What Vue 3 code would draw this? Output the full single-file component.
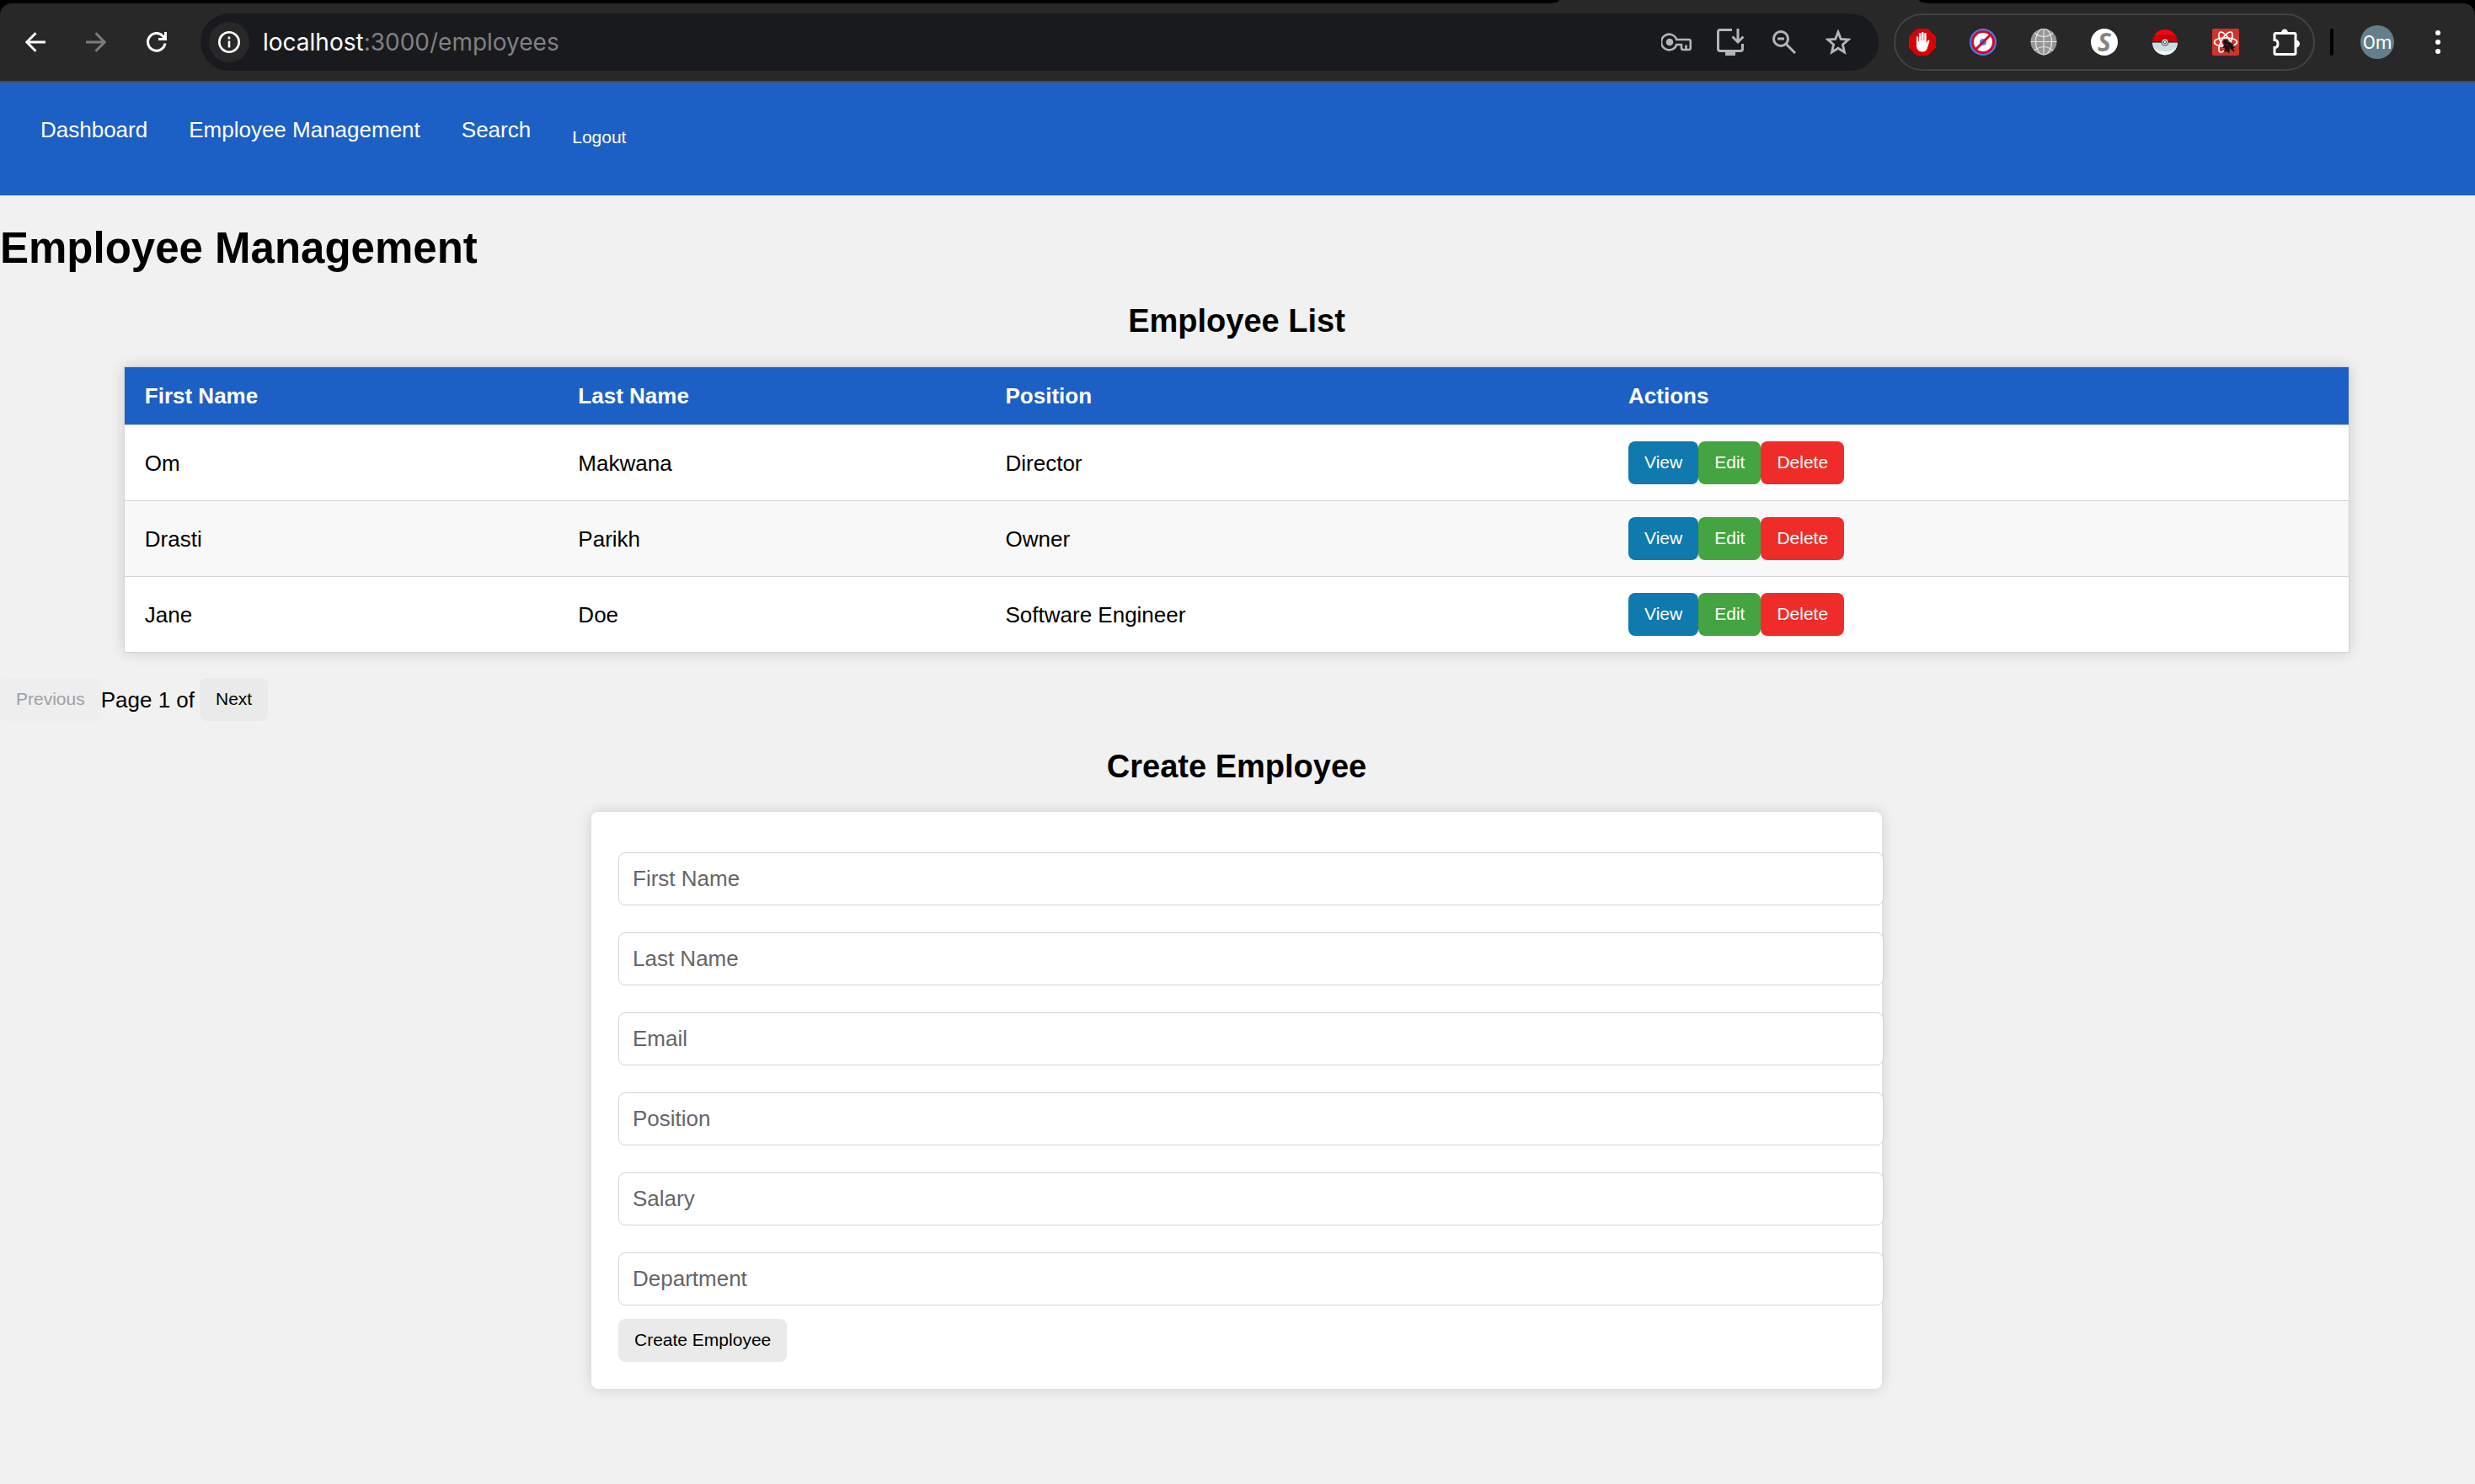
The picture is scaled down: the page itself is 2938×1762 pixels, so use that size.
<script setup>
import { ref } from 'vue'

const navLinks = ['Dashboard', 'Employee Management', 'Search']

const employees = ref([
  { id: 1, firstName: 'Om', lastName: 'Makwana', position: 'Director' },
  { id: 2, firstName: 'Drasti', lastName: 'Parikh', position: 'Owner' },
  { id: 3, firstName: 'Jane', lastName: 'Doe', position: 'Software Engineer' }
])

const fields = ['First Name', 'Last Name', 'Email', 'Position', 'Salary', 'Department']
const form = ref({})
const page = ref(1)
</script>

<template>
  <div class="browser">
    <div class="tab-strip"><span class="strip left"></span><span class="strip right"></span></div>
    <div class="toolbar">
      <div class="history">
        <button type="button" class="icon-btn" aria-label="Back">
          <svg width="24" height="24" viewBox="0 0 24 24" fill="none" stroke="#fff" stroke-width="3"><path d="M24 12H2M12.500 1.200 1.800 12l10.700 10.800" /></svg>
        </button>
        <button type="button" class="icon-btn" aria-label="Forward">
          <svg width="24" height="24" viewBox="0 0 24 24" fill="none" stroke="#7c7c7c" stroke-width="3"><path d="M0 12h22M11.500 1.200 22.200 12l-10.700 10.800" /></svg>
        </button>
        <button type="button" class="icon-btn" aria-label="Reload">
          <svg width="24" height="24" viewBox="0 0 24 24" fill="none" stroke="#fff" stroke-width="3"><path d="M22 13.500A10.300 10.300 0 1 1 19.500 5L22 8" /><path d="M22.500 0v8.500H14" /></svg>
        </button>
      </div>
      <div class="address">
        <button type="button" class="site-info" aria-label="Site information">
          <svg width="26" height="26" viewBox="0 0 26 26" fill="none" stroke="#fff"><circle cx="13" cy="13" r="11.700" stroke-width="2.600" /><path d="M13 11.500v8M13 6.500v3" stroke-width="2.600" /></svg>
        </button>
        <div class="url"><span class="host">localhost</span>:3000/employees</div>
        <div class="address-actions">
          <button type="button" class="icon-btn" aria-label="Passwords">
            <svg width="36" height="22" viewBox="0 0 36 22"><circle cx="10" cy="11" r="4.300" fill="#b4b5b7" /><path d="M18.200 8A9.300 9.300 0 1 0 18.200 14H24v4c0 1.200.8 2 2 2h6.800c1.200 0 2-.8 2-2v-8c0-1.200-.8-2-2-2ZM29.500 19.500v-5" fill="none" stroke="#b4b5b7" stroke-width="2.600" /></svg>
          </button>
          <button type="button" class="icon-btn" aria-label="Install app">
            <svg width="32" height="32" viewBox="0 0 32 32" fill="none" stroke="#b4b5b7" stroke-width="3"><path d="M18 1.500H4C2.200 1.500 1.500 2.200 1.500 4v20c0 1.800.7 2.600 2.500 2.600h24c1.800 0 2.500-.8 2.500-2.600v-6M25 0v15M18.500 9.500l6.500 6.500 6.500-6.500" /><path d="M10 27h12v5H10z" fill="#b4b5b7" stroke="none" /></svg>
          </button>
          <button type="button" class="icon-btn" aria-label="Zoom">
            <svg width="28" height="28" viewBox="0 0 28 28" fill="none" stroke="#b4b5b7" stroke-width="3"><circle cx="10" cy="10" r="8.500" /><path d="M16.200 16.200 27 27M6 10h8" /></svg>
          </button>
          <button type="button" class="icon-btn" aria-label="Bookmark">
            <svg width="30" height="30" viewBox="0 0 30 30" fill="none" stroke="#b4b5b7" stroke-width="2.800"><path d="m15 3 3.200 8.300 9 .7-6.800 5.900 2.100 9L15 22.200l-7.500 4.700 2.100-9L2.800 12l9-.7Z" /></svg>
          </button>
        </div>
      </div>
      <div class="extensions">
        <button type="button" class="icon-btn" aria-label="Ad blocker">
          <svg width="32" height="32" viewBox="0 0 32 32"><path d="M9.500 0h13L32 9.500v13L22.500 32h-13L0 22.500v-13Z" fill="#dc0005" /><path d="M9 10.500c0-1.800 2.300-1.800 2.300 0V15h.7V6.500c0-1.900 2.500-1.900 2.500 0V14h.6V5.300c0-1.900 2.500-1.900 2.500 0V14h.6V6.500c0-1.900 2.500-1.900 2.500 0v11l1.300-3c.8-1.800 2.900-1.200 2.400.6l-2.600 8.500C20.900 26 19.500 27.500 16.500 27.500 11 27.500 9 24 9 19.500Z" fill="#fff" /></svg>
        </button>
        <button type="button" class="icon-btn" aria-label="Tracker blocker">
          <svg width="32" height="32" viewBox="0 0 32 32"><circle cx="16" cy="16" r="16" fill="#4a7fee" /><circle cx="16" cy="16" r="12.500" fill="#fff" stroke="#cf0a2c" stroke-width="3" /><circle cx="16" cy="16" r="4" fill="#4b82ec" /><path d="m7.500 24.500 17-17" stroke="#cf0a2c" stroke-width="3" /></svg>
        </button>
        <button type="button" class="icon-btn" aria-label="Proxy">
          <svg width="32" height="32" viewBox="0 0 32 32"><circle cx="16" cy="15.500" r="15.500" fill="#969696" /><g fill="none" stroke="#e4e4e4" stroke-width="1.200"><ellipse cx="16" cy="15.500" rx="9.500" ry="15.500" /><path d="M16 0v31M.5 15.500h31M5 5q11 9 22 0M5 26q11-9 22 0" /></g></svg>
        </button>
        <button type="button" class="icon-btn" aria-label="Style tool">
          <span class="s-mark">S</span>
        </button>
        <button type="button" class="icon-btn" aria-label="Pokéball">
          <svg width="32" height="32" viewBox="0 0 32 32"><path d="M1 16a15 15 0 0 1 30 0Z" fill="#d00008" /><path d="M3.500 8a15 15 0 0 1 25 0q-12.500-3-25 0Z" fill="#f50712" /><path d="M1 16.500a15 15 0 0 0 30 0Z" fill="#f3f8f8" /><path d="M1 16.500h30q-1 10.500-15 10.500T1 16.500Z" fill="#cbdde1" /><path d="M1 16h30" stroke="#222" stroke-width="1" /><circle cx="16" cy="16" r="4" fill="#fff" stroke="#333" stroke-width="1" /><circle cx="16" cy="16" r="1.800" fill="#fff" stroke="#333" stroke-width="1" /></svg>
        </button>
        <button type="button" class="icon-btn" aria-label="React developer tools">
          <svg width="32" height="32" viewBox="0 0 32 32">
            <rect width="32" height="32" rx="2" fill="#d0342c" />
            <g fill="none" stroke="#fff" stroke-width="1.700"><ellipse cx="16" cy="16" rx="13.500" ry="5.200" /><ellipse cx="16" cy="16" rx="13.500" ry="5.200" transform="rotate(60 16 16)" /><ellipse cx="16" cy="16" rx="13.500" ry="5.200" transform="rotate(120 16 16)" /></g>
            <path d="m13.500 20 10.500-2.500 3 4-2 8.500H14.500Z" fill="#d0342c" />
            <circle cx="16" cy="16" r="3" fill="#161616" />
            <ellipse cx="17.500" cy="23" rx="2.600" ry="5" transform="rotate(-28 17.500 23)" fill="#161616" />
            <ellipse cx="21.800" cy="20.500" rx="2.600" ry="5" transform="rotate(-28 21.800 20.500)" fill="#161616" />
            <path d="m12.500 22.500 3-1.500M14.500 27l3-2M19.500 29v-3M20 16v3M24.500 18l-2 1.500M26.500 22.500l-3-.5M26 27l-2-3" stroke="#161616" stroke-width="1.700" />
          </svg>
        </button>
        <button type="button" class="icon-btn" aria-label="Extensions">
          <svg width="32" height="32" viewBox="0 0 32 32"><path d="M3.500 5.500h22q1.500 0 1.500 1.500v22q0 1.500-1.500 1.500h-22q-1.500 0-1.500-1.500v-6.500c3 0 4-2 4-4.500s-1-4.500-4-4.500V7q0-1.500 1.500-1.500Z" fill="none" stroke="#fff" stroke-width="3" /><path d="M10 5a4 4.500 0 0 1 8 0ZM27.500 13.500a4.500 4.500 0 0 1 0 9Z" fill="#fff" /></svg>
        </button>
      </div>
      <span class="divider"></span>
      <button type="button" class="avatar">Om</button>
      <button type="button" class="icon-btn menu" aria-label="Menu">
        <svg width="8" height="28" viewBox="0 0 8 28" fill="#fff"><circle cx="4" cy="3" r="3" /><circle cx="4" cy="14" r="3" /><circle cx="4" cy="25" r="3" /></svg>
      </button>
    </div>
  </div>

  <nav class="navbar">
    <a v-for="link in navLinks" :key="link" href="#">{{ link }}</a>
    <button type="button" class="logout">Logout</button>
  </nav>

  <main>
    <h1>Employee Management</h1>

    <h2>Employee List</h2>
    <table>
      <thead>
        <tr>
          <th class="col-first">First Name</th>
          <th class="col-last">Last Name</th>
          <th class="col-position">Position</th>
          <th>Actions</th>
        </tr>
      </thead>
      <tbody>
        <tr v-for="employee in employees" :key="employee.id">
          <td>{{ employee.firstName }}</td>
          <td>{{ employee.lastName }}</td>
          <td>{{ employee.position }}</td>
          <td>
            <div class="actions">
              <button type="button" class="btn view">View</button>
              <button type="button" class="btn edit">Edit</button>
              <button type="button" class="btn delete">Delete</button>
            </div>
          </td>
        </tr>
      </tbody>
    </table>

    <div class="pagination">
      <button type="button" class="btn" :disabled="page === 1">Previous</button>
      <span>Page {{ page }} of</span>
      <button type="button" class="btn">Next</button>
    </div>

    <h2>Create Employee</h2>
    <form @submit.prevent>
      <input v-for="field in fields" :key="field" v-model="form[field]" type="text" :placeholder="field" :aria-label="field" />
      <button type="submit" class="btn">Create Employee</button>
    </form>
  </main>
</template>

<style>
body {
  margin: 0;
  background: #f1f1f1;
  font-family: "Liberation Sans", Arial, sans-serif;
  font-size: 26px;
  line-height: 30px;
  color: #000;
}
</style>

<style scoped>
button {
  border: 0;
  font-family: inherit;
}

.browser {
  background: #000;
  border-bottom: 2px solid #4c4b4a;
}

.tab-strip {
  display: flex;
  justify-content: space-between;
  height: 4px;
  background: #282828;
}

.strip {
  background: #000;
}

.strip.left {
  width: 63%;
  border-bottom-right-radius: 14px 4px;
}

.strip.right {
  width: 22%;
  flex: 0 0 auto;
  min-width: 660px;
  border-bottom-left-radius: 14px 4px;
}

.toolbar {
  display: flex;
  align-items: center;
  height: 92px;
  padding-right: 40px;
  border-radius: 14px 14px 0 0;
  background: #282828;
}

.icon-btn {
  display: flex;
  padding: 0;
  background: none;
}

.history {
  display: flex;
  gap: 48px;
  margin: 0 40px 0 30px;
}

.address {
  display: flex;
  flex: 1;
  align-items: center;
  height: 68px;
  box-sizing: border-box;
  padding: 0 32px 0 10px;
  border-radius: 34px;
  background: #191a1d;
}

.site-info {
  display: flex;
  align-items: center;
  justify-content: center;
  width: 48px;
  height: 48px;
  padding: 0;
  border-radius: 50%;
  background: #282828;
}

.url {
  flex: 1;
  margin-left: 16px;
  font-family: Inter, Roboto, sans-serif;
  font-size: 28px;
  line-height: 34px;
  color: #808182;
}

.host {
  color: #fff;
}

.address-actions {
  display: flex;
  align-items: center;
  gap: 32px;
}

.address-actions .icon-btn {
  width: 32px;
  justify-content: center;
}

.address-actions svg {
  flex: none;
}

.extensions {
  display: flex;
  align-items: center;
  gap: 40px;
  height: 68px;
  box-sizing: border-box;
  margin-left: 18px;
  padding: 0 16px;
  border: 2px solid #434343;
  border-radius: 34px;
}

.s-mark {
  width: 32px;
  border-radius: 50%;
  background: #fff;
  font: italic bold 30px/32px "Noto Sans", sans-serif;
  text-align: center;
  color: #858585;
}

.divider {
  width: 4px;
  height: 32px;
  margin: 0 32px 0 18px;
  border-radius: 2px;
  background: #000;
}

.avatar {
  width: 40px;
  height: 40px;
  padding: 0;
  border-radius: 50%;
  background: #657e8b;
  font-family: Roboto, sans-serif;
  font-size: 22px;
  color: #fff;
}

.menu {
  margin-left: 48px;
}

.navbar {
  display: flex;
  align-items: flex-start;
  gap: 49px;
  height: 93px;
  padding: 41px 48px 0;
  background: #1d60c5;
}

.navbar a {
  color: #fff;
  text-decoration: none;
}

.logout {
  margin-top: 11px;
  padding: 0;
  background: none;
  font-size: 21px;
  line-height: 26px;
  color: #fff;
}

main {
  padding-right: 2px;
}

h1 {
  margin: 33px 0 34px;
  font-size: 51px;
  line-height: 60px;
}

h2 {
  margin: 32px 0;
  font-size: 38px;
  line-height: 44px;
  text-align: center;
}

table {
  width: 90%;
  margin: 32px auto 30px;
  table-layout: fixed;
  border: 1px solid #d4d4d4;
  border-collapse: collapse;
  background: #fff;
  box-shadow: 0 0 16px rgba(0, 0, 0, 0.15);
}

tr {
  border-bottom: 1px solid #d4d4d4;
}

tbody tr:nth-child(even) {
  background: #f8f8f8;
}

th,
td {
  box-sizing: border-box;
  padding: 19px 24px;
  text-align: left;
}

th {
  background: #1d60c5;
  color: #fff;
}

.col-first {
  width: 19.5%;
}

.col-last {
  width: 19.2%;
}

.col-position {
  width: 28%;
}

.actions {
  display: flex;
}

.btn {
  padding: 13px 19px 14px;
  border-radius: 8px;
  background: #eaeaea;
  font-size: 21px;
  line-height: 24px;
  color: #000;
}

.btn:disabled {
  background: #eeeeee;
  color: #a0a0a0;
}

.btn.view {
  background: #1079ad;
  color: #fff;
}

.btn.edit {
  background: #43a441;
  color: #fff;
}

.btn.delete {
  background: #f02c2a;
  color: #fff;
}

.pagination {
  display: flex;
  align-items: center;
}

.pagination span {
  margin-right: 6px;
}

form {
  width: 50%;
  margin: 32px auto;
  padding: 32px;
  border-radius: 8px;
  background: #fff;
  box-shadow: 0 0 16px rgba(0, 0, 0, 0.15);
}

input {
  display: block;
  width: 100%;
  height: 29px;
  margin: 16px 0 32px;
  padding: 16px;
  border: 1px solid #d4d4d4;
  border-radius: 8px;
  background: #fff;
  font-family: inherit;
  font-size: 26px;
}

input:last-of-type {
  margin-bottom: 16px;
}

input::placeholder {
  color: #666;
}
</style>
